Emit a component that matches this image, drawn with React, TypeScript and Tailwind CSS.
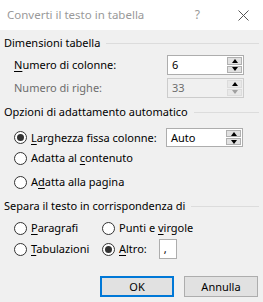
import React from "react";

const U = ({ c }: { c: string }) => <span className="underline underline-offset-2">{c}</span>;

function Spin({ value, disabled, h = 20 }: { value: string; disabled?: boolean; h?: number }) {
  return (
    <div
      className={`flex w-[77px] border ${disabled ? "border-[#cccccc] bg-[#f0f0f0]" : "border-[#adadad] bg-white"} ${h === 19 ? "h-[19px]" : "h-[20px]"}`}
    >
      <div className={`flex flex-1 items-center pl-[4px] ${disabled ? "text-[#6d6d6d]" : "text-black"}`}>{value}</div>
      <div className="flex w-[16px] flex-col gap-[1px] py-[1px] pr-[1px]">
        <div className={`flex flex-1 items-center justify-center border ${disabled ? "border-[#dcdcdc] bg-[#e8e8e8]" : "border-[#b0b0b0] bg-[#e1e1e1]"}`}>
          <div className="h-0 w-0 border-x-[3.5px] border-b-[4px] border-x-transparent border-b-black" />
        </div>
        <div className={`flex flex-1 items-center justify-center border ${disabled ? "border-[#dcdcdc] bg-[#e8e8e8]" : "border-[#b0b0b0] bg-[#e1e1e1]"}`}>
          <div className={`h-0 w-0 border-x-[3.5px] border-t-[4px] border-x-transparent ${disabled ? "border-t-[#a0a0a0]" : "border-t-black"}`} />
        </div>
      </div>
    </div>
  );
}

function Radio({ checked }: { checked?: boolean }) {
  return (
    <div className="flex h-[13px] w-[13px] shrink-0 items-center justify-center rounded-full border border-[#333333] bg-white">
      {checked && <div className="h-[7px] w-[7px] rounded-full bg-[#333333]" />}
    </div>
  );
}

function Group({ title, cls }: { title: string; cls: string }) {
  return (
    <div className={`flex h-[16px] items-center gap-[6px] pl-[4px] pr-[4px] ${cls}`}>
      <span className="whitespace-nowrap">{title}</span>
      <div className="h-px flex-1 bg-[#dcdcdc]" />
    </div>
  );
}

export default function App() {
  return (
    <div
      className="flex h-[302px] w-[263px] flex-col overflow-hidden whitespace-nowrap bg-[#f0f0f0] text-[11px] leading-[16px] text-black"
      style={{ fontFamily: '"Segoe UI", "Noto Sans", sans-serif' }}
    >
      <div className="flex h-[30px] shrink-0 items-center bg-white pl-[7px] pr-[14px] text-[#999999]">
        <span className="flex-1 text-[11.5px]">Converti il testo in tabella</span>
        <span className="mr-[38px] text-[12px]">?</span>
        <svg width="11" height="11" viewBox="0 0 11 11">
          <path d="M0.5 0.5 L10.5 10.5 M10.5 0.5 L0.5 10.5" stroke="#555555" strokeWidth="1" />
        </svg>
      </div>

      <Group title="Dimensioni tabella" cls="mt-[5px]" />
      <div className="mt-[4px] flex h-[20px] items-center pl-[14px] pr-[19px]">
        <span className="flex-1"><U c="N" />umero di colonne:</span>
        <Spin value="6" />
      </div>
      <div className="mt-[3px] flex h-[20px] items-center pl-[14px] pr-[19px] text-[#6d6d6d]">
        <span className="flex-1">Numero di righe:</span>
        <Spin value="33" disabled />
      </div>

      <Group title="Opzioni di adattamento automatico" cls="mt-[6px]" />
      <div className="mt-[8px] flex h-[19px] items-center pl-[14px] pr-[20px]">
        <Radio checked />
        <span className="ml-[4px] flex-1"><U c="L" />arghezza fissa colonne:</span>
        <Spin value="Auto" h={19} />
      </div>
      <div className="mt-[3px] flex h-[16px] items-center pl-[14px]">
        <Radio />
        <span className="ml-[4px]">Adatta al <U c="c" />ontenuto</span>
      </div>
      <div className="mt-[8px] flex h-[16px] items-center pl-[14px]">
        <Radio />
        <span className="ml-[4px]">A<U c="d" />atta alla pagina</span>
      </div>

      <Group title="Separa il testo in corrispondenza di" cls="mt-[8px]" />
      <div className="mt-[6px] flex h-[16px] items-center pl-[14px]">
        <div className="flex w-[88px] items-center">
          <Radio />
          <span className="ml-[4px]"><U c="P" />aragrafi</span>
        </div>
        <Radio />
        <span className="ml-[4px]">Punti e <U c="v" />irgole</span>
      </div>
      <div className="mt-[3px] flex h-[20px] items-center pl-[14px]">
        <div className="flex w-[88px] items-center">
          <Radio />
          <span className="ml-[4px]"><U c="T" />abulazioni</span>
        </div>
        <Radio checked />
        <span className="ml-[4px]"><U c="A" />ltro:</span>
        <div className="ml-[12px] flex h-[20px] w-[18px] items-center border border-[#adadad] bg-white pl-[4px]">,</div>
      </div>

      <div className="mt-[17px] flex justify-end gap-[10px] pr-[5px]">
        <button className="flex h-[21px] w-[74px] items-center justify-center border-2 border-[#0078d7] bg-[#e1e1e1]">OK</button>
        <button className="flex h-[21px] w-[74px] items-center justify-center border border-[#adadad] bg-[#e1e1e1]">Annulla</button>
      </div>
    </div>
  );
}
